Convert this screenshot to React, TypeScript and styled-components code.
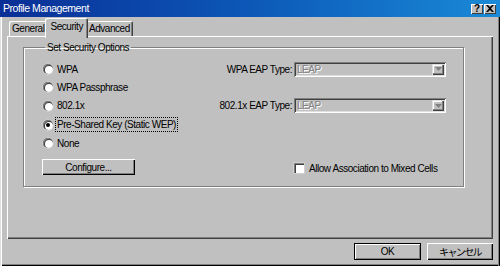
import React from 'react';
import styled, { createGlobalStyle } from 'styled-components';

const GlobalStyle = createGlobalStyle`
    html, body {
        margin: 0;
        padding: 0;
        background: #c0c0c0;
    }
    * {
        box-sizing: border-box;
    }
`

const uiFont = `"Liberation Sans", Arial, "Noto Sans CJK JP", sans-serif`;

const App = () => {
    return (
        <Window>
            <GlobalStyle />
            <TitleBar>
                <Title>Profile Management</Title>
                <CaptionButtons>
                    <CaptionButton>?</CaptionButton>
                    <CaptionButton>
                        <svg width='8' height='7' viewBox='0 0 8 7'>
                            <path d='M0 0h2l2 2 2-2h2L5 3.5 8 7H6L4 5 2 7H0l3-3.5z' fill='#000' />
                        </svg>
                    </CaptionButton>
                </CaptionButtons>
            </TitleBar>
            <Body>
                <TabStrip>
                    <Tab>General</Tab>
                    <Tab $active>Security</Tab>
                    <Tab>Advanced</Tab>
                </TabStrip>
                <Panel>
                    <GroupBox>
                        <Legend>Set Security Options</Legend>
                        <OptionsGrid>
                            <RadioRow>
                                <Radio />
                                <RadioLabel>WPA</RadioLabel>
                            </RadioRow>
                            <FieldLabel>WPA EAP Type:</FieldLabel>
                            <Combo>
                                <ComboText>LEAP</ComboText>
                                <ComboButton>
                                    <svg width='7' height='4' viewBox='0 0 7 4'>
                                        <path d='M0 0h7L3.5 4z' fill='#808080' />
                                    </svg>
                                </ComboButton>
                            </Combo>

                            <RadioRow>
                                <Radio />
                                <RadioLabel>WPA Passphrase</RadioLabel>
                            </RadioRow>
                            <span />
                            <span />

                            <RadioRow>
                                <Radio />
                                <RadioLabel>802.1x</RadioLabel>
                            </RadioRow>
                            <FieldLabel>802.1x EAP Type:</FieldLabel>
                            <Combo>
                                <ComboText>LEAP</ComboText>
                                <ComboButton>
                                    <svg width='7' height='4' viewBox='0 0 7 4'>
                                        <path d='M0 0h7L3.5 4z' fill='#808080' />
                                    </svg>
                                </ComboButton>
                            </Combo>

                            <RadioRow>
                                <Radio $checked />
                                <RadioLabel $focused>Pre-Shared Key (Static WEP)</RadioLabel>
                            </RadioRow>
                            <span />
                            <span />

                            <RadioRow>
                                <Radio />
                                <RadioLabel>None</RadioLabel>
                            </RadioRow>
                            <span />
                            <span />

                            <ConfigureCell>
                                <PushButton $width={93} $height={16}>Configure...</PushButton>
                            </ConfigureCell>
                            <span />
                            <CheckRow>
                                <CheckBox />
                                <span>Allow Association to Mixed Cells</span>
                            </CheckRow>
                        </OptionsGrid>
                    </GroupBox>
                </Panel>
                <ButtonRow>
                    <PushButton $width={67} $height={17} $default>OK</PushButton>
                    <PushButton $width={66} $height={17}>
                        <Kana>キャンセル</Kana>
                    </PushButton>
                </ButtonRow>
            </Body>
        </Window>
    )
}

export default App;

const Window = styled.div`
    width: 500px;
    height: 266px;
    background: #c0c0c0;
    font-family: ${uiFont};
    font-size: 10px;
    letter-spacing: -0.45px;
    color: #000;
    display: flex;
    flex-direction: column;
    box-shadow: inset 1px 0 #dfdfdf, inset 2px 0 #fff, inset -1px 0 #000, inset -2px 0 #808080,
        inset 0 -1px #000, inset 0 -2px #808080;
`
const TitleBar = styled.div`
    height: 17px;
    display: flex;
    align-items: center;
    justify-content: space-between;
    padding: 0 4px 1px 3px;
    background: linear-gradient(to right, #0a2f96, #0c58b8 50%, #1a8ad6);
`
const Title = styled.span`
    color: #fff;
    font-size: 10.5px;
    line-height: 13px;
`
const CaptionButtons = styled.div`
    display: flex;
    gap: 1px;
    margin-top: 1px;
`
const CaptionButton = styled.div`
    width: 12px;
    height: 10px;
    background: #c0c0c0;
    display: flex;
    align-items: center;
    justify-content: center;
    font-weight: bold;
    font-size: 10px;
    line-height: 10px;
    letter-spacing: 0;
    box-shadow: inset 1px 1px #fff, inset -1px -1px #404040;
`
const Body = styled.div`
    flex: 1;
    display: flex;
    flex-direction: column;
    padding: 1px 7px 0 7px;
`
const TabStrip = styled.div`
    height: 18px;
    display: flex;
    align-items: flex-end;
    padding-left: 2px;
    position: relative;
    z-index: 1;
`
const Tab = styled.div<{ $active?: boolean }>`
    height: ${p => (p.$active ? '20px' : '15px')};
    margin: ${p => (p.$active ? '0 -2px -2px' : '0')};
    padding: ${p => (p.$active ? '2px 5px 0' : '1px 3px 0')};
    background: #c0c0c0;
    line-height: 13px;
    border-radius: 2px 2px 0 0;
    box-shadow: inset 1px 1px #fff, inset -1px 0 #404040, inset -2px 0 #808080;
    position: relative;
    z-index: ${p => (p.$active ? 2 : 0)};
`
const Panel = styled.div`
    height: 203px;
    padding: 5px 17px 0 16px;
    box-shadow: inset 1px 1px #fff, inset -1px -1px #404040, inset -2px -2px #808080;
`
const GroupBox = styled.fieldset`
    margin: 0;
    padding: 6px 17px 11px 19px;
    border: 1px solid #808080;
    box-shadow: inset 1px 1px #fff, 1px 1px #fff;
    width: 441px;
`
const Legend = styled.legend`
    padding: 0 2px;
    margin-left: 2px;
    line-height: 13px;
`
const OptionsGrid = styled.div`
    display: grid;
    grid-template-columns: 1fr auto 152px;
    grid-template-rows: 18px 18px 19px 19px 18px 23px;
    column-gap: 2px;
    row-gap: 0;
    align-items: center;
    white-space: nowrap;
`
const RadioRow = styled.label`
    display: flex;
    align-items: center;
    gap: 3px;
`
const Radio = styled.span<{ $checked?: boolean }>`
    width: 10px;
    height: 10px;
    border-radius: 50%;
    background: #fff;
    box-shadow: inset 1px 1px #808080, inset 1px 1px 0 1px #404040, 0 0 0 0.5px #dfdfdf;
    display: flex;
    align-items: center;
    justify-content: center;
    &::after {
        content: '';
        width: 4px;
        height: 4px;
        border-radius: 50%;
        background: ${p => (p.$checked ? '#000' : 'transparent')};
    }
`
const RadioLabel = styled.span<{ $focused?: boolean }>`
    line-height: 13px;
    padding: 0 1px;
    outline: ${p => (p.$focused ? '1px dotted #000' : 'none')};
`
const FieldLabel = styled.span`
    text-align: right;
`
const Combo = styled.div`
    height: 15px;
    display: flex;
    align-items: center;
    justify-content: space-between;
    padding: 2px 1px 2px 3px;
    background: #c0c0c0;
    box-shadow: inset 1px 1px #808080, inset -1px -1px #fff, inset 2px 2px #404040, inset -2px -2px #dfdfdf;
`
const ComboText = styled.span`
    color: #808080;
    text-shadow: 1px 1px #fff;
    line-height: 11px;
`
const ComboButton = styled.span`
    width: 12px;
    height: 11px;
    display: flex;
    align-items: center;
    justify-content: center;
    margin-right: 1px;
    box-shadow: inset 1px 1px #dfdfdf, inset -1px -1px #404040, inset -2px -2px #808080, inset 2px 2px #fff;
`
const ConfigureCell = styled.div`
    display: flex;
    align-self: end;
    margin-left: -1px;
`
const PushButton = styled.div<{ $width: number; $height: number; $default?: boolean }>`
    width: ${p => p.$width}px;
    height: ${p => p.$height}px;
    display: flex;
    align-items: center;
    justify-content: center;
    background: #c0c0c0;
    box-shadow: ${p => (p.$default
        ? 'inset 0 0 0 1px #000, inset 2px 2px #fff, inset -2px -2px #808080'
        : 'inset 1px 1px #fff, inset -1px -1px #000, inset -2px -2px #808080')};
`
const CheckRow = styled.label`
    display: flex;
    align-items: center;
    align-self: end;
    gap: 5px;
    height: 14px;
`
const CheckBox = styled.span`
    width: 10px;
    height: 10px;
    background: #fff;
    box-shadow: inset 1px 1px #808080, inset 2px 2px #404040, 0 0 0 0.5px #dfdfdf;
`
const ButtonRow = styled.div`
    display: flex;
    justify-content: flex-end;
    gap: 6px;
    margin-top: 4px;
`
const Kana = styled.span`
    font-family: "Noto Sans CJK JP", sans-serif;
    font-size: 10px;
    letter-spacing: -1.6px;
`
